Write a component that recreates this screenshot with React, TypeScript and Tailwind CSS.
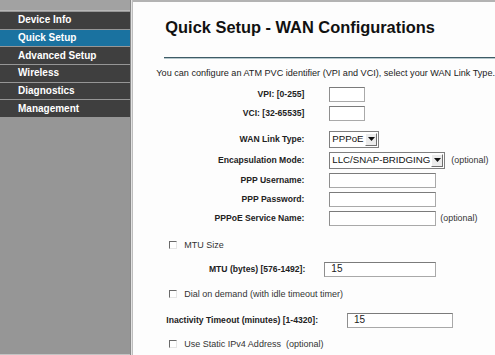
import React from "react";

const menu = [
  "Device Info",
  "Quick Setup",
  "Advanced Setup",
  "Wireless",
  "Diagnostics",
  "Management",
];

function TextInput({ w, value }: { w: string; value?: string }) {
  return (
    <div
      className={`${w} h-[15px] bg-white border border-[#a9a9a9] border-t-[#7b7b7b] border-l-[#8e8e8e] flex items-center pl-[6px] text-[10px] text-[#222] leading-none`}
    >
      {value}
    </div>
  );
}

function Select({ w, value }: { w: string; value: string }) {
  return (
    <div
      className={`${w} h-[17px] bg-white border border-[#7f7f7f] flex items-center justify-between pl-[2px] pr-[1px] overflow-hidden`}
    >
      <span className="text-[9.7px] text-[#111] leading-none whitespace-nowrap">{value}</span>
      <span className="shrink-0 w-[12px] h-[13px] bg-[#ececec] border border-t-white border-l-white border-b-[#707070] border-r-[#707070] flex items-center justify-center">
        <svg width="7" height="4" viewBox="0 0 7 4">
          <path d="M0 0 H7 L3.5 4 Z" fill="#111" />
        </svg>
      </span>
    </div>
  );
}

function Checkbox() {
  return (
    <span className="w-[8px] h-[8px] bg-white border border-t-[#6a6a6a] border-l-[#6a6a6a] border-r-[#e6e6e6] border-b-[#e6e6e6] inline-block" />
  );
}

function Row({
  label,
  children,
  className,
}: {
  label: string;
  children: React.ReactNode;
  className: string;
}) {
  return (
    <div className={`flex items-center ${className}`}>
      <div className="w-[148px] text-right font-bold text-[8.6px] text-[#222] leading-none">
        {label}
      </div>
      <div className="ml-[25px] flex items-center">{children}</div>
    </div>
  );
}

function CheckRow({ label, className }: { label: string; className: string }) {
  return (
    <div className={`flex items-center h-[12px] ml-[13px] ${className}`}>
      <Checkbox />
      <span className="ml-[7px] text-[9px] text-[#333] leading-none">{label}</span>
    </div>
  );
}

export default function App() {
  return (
    <div className="w-[495px] h-[355px] flex bg-[#fdfdfd] overflow-hidden font-['Liberation_Sans',Arial,sans-serif]">
      {/* Sidebar */}
      <div className="w-[131px] h-full bg-[#969696] flex flex-col border-b border-[#c4c4c4]">
        <div className="h-[11px] bg-[#a2a2a2] border-b border-[#b8b8b8]" />
        <div className="flex flex-col gap-[1px] mt-[1px]">
          {menu.map((m) => (
            <div
              key={m}
              className={`h-[16.7px] flex items-center pl-[18px] text-[10px] font-bold text-white leading-none ${
                m === "Quick Setup" ? "bg-[#1a72a0]" : "bg-[#3f3f3f]"
              }`}
            >
              {m}
            </div>
          ))}
        </div>
      </div>
      <div className="w-[3px] h-full bg-[#e2e2e2] border-l border-[#8a8a8a] border-r border-r-[#bdbdbd]" />

      {/* Content */}
      <div className="flex-1 h-full border-t-2 border-[#b3b3b3] flex flex-col pl-[23px]">
        <div className="ml-[9px] mt-[15.5px] h-[18px] text-[16.4px] font-bold text-[#111] leading-[18px] whitespace-nowrap">
          Quick Setup - WAN Configurations
        </div>
        <div className="ml-[8px] mt-[21.5px] h-[1px] bg-[#3e5c66]" />
        <div className="ml-[8px] h-[1px] bg-[#b6c8cd]" />
        <div className="mt-[8.5px] h-[11px] text-[9.1px] text-[#222] leading-[11px] whitespace-nowrap">
          You can configure an ATM PVC identifier (VPI and VCI), select your WAN Link Type.
        </div>

        <Row label="VPI: [0-255]" className="mt-[7.5px] h-[16px]">
          <TextInput w="w-[36px]" />
        </Row>
        <Row label="VCI: [32-65535]" className="mt-[3px] h-[16px]">
          <TextInput w="w-[36px]" />
        </Row>
        <Row label="WAN Link Type:" className="mt-[9.5px] h-[17px]">
          <Select w="w-[50px]" value="PPPoE" />
        </Row>
        <Row label="Encapsulation Mode:" className="mt-[4px] h-[17px]">
          <Select w="w-[116px]" value="LLC/SNAP-BRIDGING" />
          <span className="ml-[6px] text-[8.9px] text-[#333] leading-none">(optional)</span>
        </Row>
        <Row label="PPP Username:" className="mt-[4px] h-[15px]">
          <TextInput w="w-[107px]" />
        </Row>
        <Row label="PPP Password:" className="mt-[4px] h-[15px]">
          <TextInput w="w-[107px]" />
        </Row>
        <Row label="PPPoE Service Name:" className="mt-[4px] h-[15px]">
          <TextInput w="w-[107px]" />
          <span className="ml-[4px] text-[8.9px] text-[#333] leading-none">(optional)</span>
        </Row>

        <CheckRow label="MTU Size" className="mt-[13.5px]" />

        <div className="flex items-center mt-[10px] h-[16px]">
          <div className="w-[149px] text-right font-bold text-[8.6px] text-[#222] leading-none">
            MTU (bytes) [576-1492]:
          </div>
          <div className="ml-[19px]">
            <TextInput w="w-[112px]" value="15" />
          </div>
        </div>

        <CheckRow label="Dial on demand (with idle timeout timer)" className="mt-[11px]" />

        <div className="flex items-center mt-[12px] h-[16px]">
          <div className="ml-[10px] font-bold text-[8.6px] text-[#222] leading-none whitespace-nowrap">
            Inactivity Timeout (minutes) [1-4320]:
          </div>
          <div className="ml-auto mr-[42px]">
            <TextInput w="w-[106px]" value="15" />
          </div>
        </div>

        <CheckRow label="Use Static IPv4 Address  (optional)" className="mt-[10px] whitespace-pre" />
      </div>
    </div>
  );
}
